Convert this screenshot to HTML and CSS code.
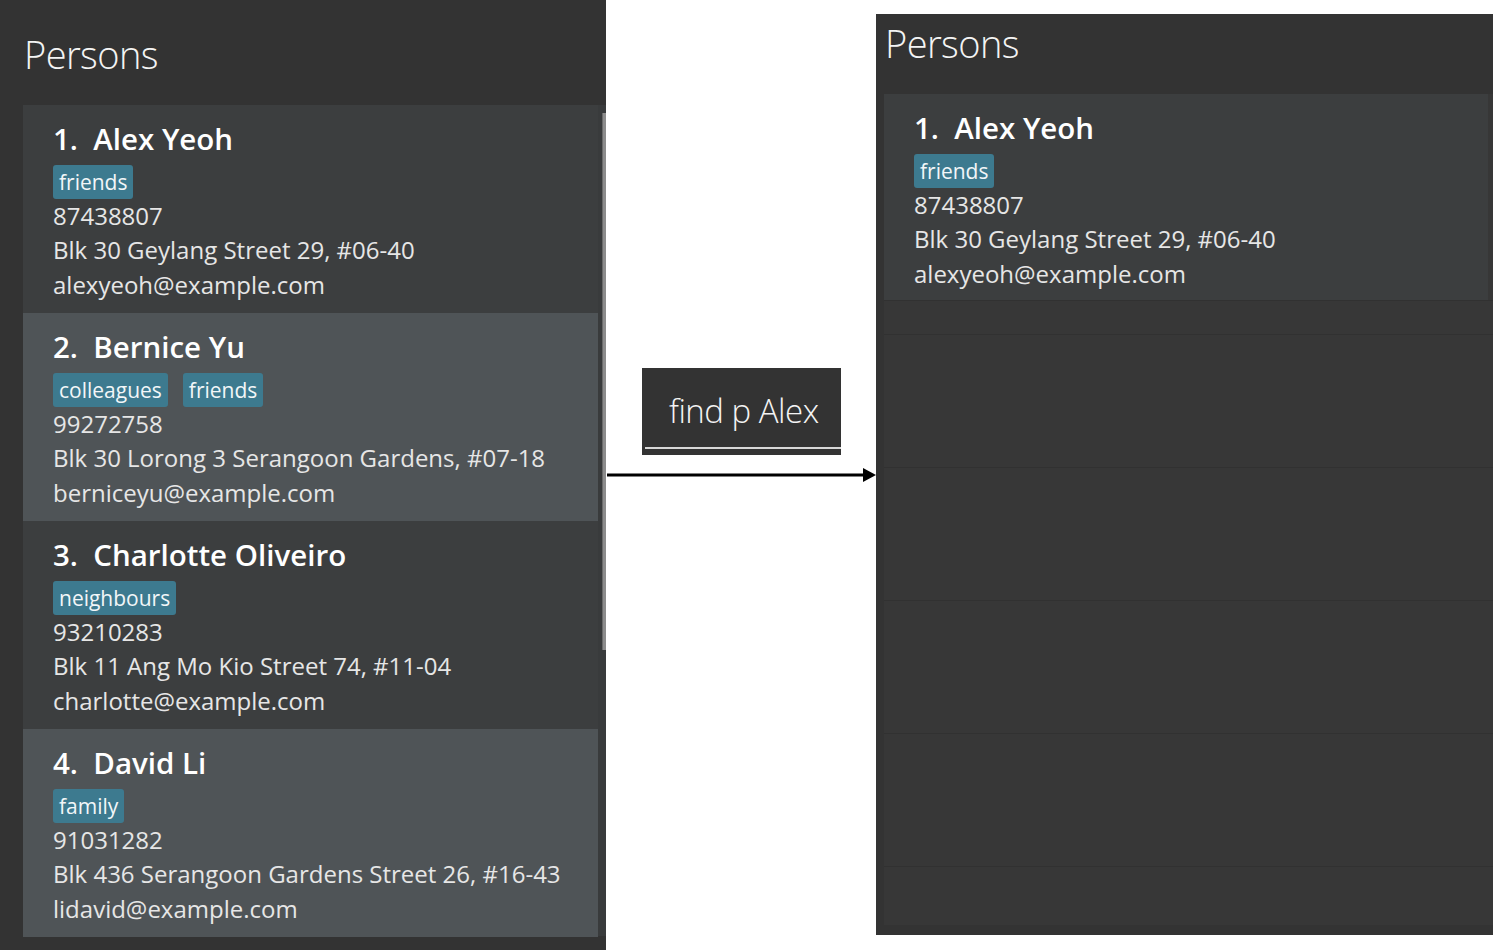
FILE: index.html
```html
<!DOCTYPE html>
<html lang="en">
<head>
<meta charset="utf-8">
<title>Persons - find p Alex</title>
<link rel="stylesheet" href="styles.css">
</head>
<body>
<div class="page">
  <section class="panel panel-left">
    <h1 class="title">Persons</h1>
    <div class="list-wrap">
      <div class="list">
        <div class="card odd">
          <div class="name">1.&nbsp; Alex Yeoh</div>
          <div class="tags"><span class="tag">friends</span></div>
          <div class="line">87438807</div>
          <div class="line">Blk 30 Geylang Street 29, #06-40</div>
          <div class="line">alexyeoh@example.com</div>
        </div>
        <div class="card even">
          <div class="name">2.&nbsp; Bernice Yu</div>
          <div class="tags"><span class="tag">colleagues</span><span class="tag">friends</span></div>
          <div class="line">99272758</div>
          <div class="line">Blk 30 Lorong 3 Serangoon Gardens, #07-18</div>
          <div class="line">berniceyu@example.com</div>
        </div>
        <div class="card odd">
          <div class="name">3.&nbsp; Charlotte Oliveiro</div>
          <div class="tags"><span class="tag">neighbours</span></div>
          <div class="line">93210283</div>
          <div class="line">Blk 11 Ang Mo Kio Street 74, #11-04</div>
          <div class="line">charlotte@example.com</div>
        </div>
        <div class="card even">
          <div class="name">4.&nbsp; David Li</div>
          <div class="tags"><span class="tag">family</span></div>
          <div class="line">91031282</div>
          <div class="line">Blk 436 Serangoon Gardens Street 26, #16-43</div>
          <div class="line">lidavid@example.com</div>
        </div>
      </div>
      <div class="scrollbar"><div class="thumb"></div></div>
    </div>
  </section>

  <div class="middle">
    <div class="cmd">
      <div class="cmd-text">find p Alex</div>
      <div class="cmd-line"></div>
    </div>
    <svg class="arrow" width="270" height="14" viewBox="0 0 270 14">
      <line x1="1" y1="7" x2="259" y2="7" stroke="#000" stroke-width="3"/>
      <polygon points="257,0 270,7 257,14" fill="#000"/>
    </svg>
  </div>

  <section class="panel panel-right">
    <h1 class="title">Persons</h1>
    <div class="rlist">
      <div class="card odd rcard">
        <div class="name">1.&nbsp; Alex Yeoh</div>
        <div class="tags"><span class="tag">friends</span></div>
        <div class="line">87438807</div>
        <div class="line">Blk 30 Geylang Street 29, #06-40</div>
        <div class="line">alexyeoh@example.com</div>
      </div>
      <div class="empty e1"></div>
      <div class="empty e2"></div>
      <div class="empty e2"></div>
      <div class="empty e2"></div>
      <div class="empty e2"></div>
      <div class="empty e3"></div>
    </div>
  </section>
</div>
</body>
</html>
```
FILE: styles.css
```css
html, body {
  margin: 0;
  padding: 0;
  background: #ffffff;
}

body {
  font-family: "Open Sans", "Noto Sans", sans-serif;
  width: 1493px;
  height: 950px;
  overflow: hidden;
}

.page {
  display: flex;
  align-items: flex-start;
  height: 950px;
}

.panel {
  background: #333333;
  box-sizing: border-box;
  display: flex;
  flex-direction: column;
}

.panel-left {
  width: 606px;
  height: 950px;
}

.panel-right {
  width: 617px;
  height: 921px;
  margin-top: 14px;
}

.title {
  margin: 0;
  font-weight: 300;
  font-size: 38px;
  color: #f4f4f4;
  letter-spacing: -0.6px;
}

.panel-left .title {
  height: 95px;
  padding-top: 10px;
  line-height: 88px;
  padding-left: 24px;
}

.panel-right .title {
  height: 80px;
  line-height: 58px;
  padding-left: 9px;
}

.list-wrap {
  display: flex;
  padding-left: 23px;
}

.list {
  width: 575px;
  display: flex;
  flex-direction: column;
}

.scrollbar {
  width: 8px;
  background: #393b3c;
  display: flex;
  justify-content: flex-end;
  padding-top: 8px;
  box-sizing: border-box;
  height: 831px;
}

.thumb {
  width: 3px;
  height: 537px;
  background: #8c8c8c;
  border-left: 1px solid #6a6a6a;
}

.card {
  box-sizing: border-box;
  padding: 16px 0 0 30px;
  display: flex;
  flex-direction: column;
  height: 208px;
  flex-shrink: 0;
}

.card.odd { background: #3c3e3f; }
.card.even { background: #4f5457; }

.name {
  font-weight: 600;
  font-size: 29.5px;
  line-height: 36px;
  height: 36px;
  color: #ffffff;
  margin-bottom: 8px;
  white-space: nowrap;
}

.tags {
  display: flex;
  gap: 15px;
  height: 34px;
}

.tag {
  background: #3d7a8f;
  color: #f2f6f8;
  font-size: 21px;
  line-height: 34px;
  height: 34px;
  padding: 0 6px;
  border-radius: 3px;
}

.line {
  font-size: 24px;
  line-height: 34.5px;
  height: 34.5px;
  margin-top: -0.5px;
  margin-bottom: 0.5px;
  color: #e6e6e6;
  white-space: nowrap;
}

.middle {
  width: 270px;
  padding-top: 368px;
  display: flex;
  flex-direction: column;
}

.cmd {
  margin-left: 36px;
  width: 199px;
  height: 87px;
  background: #333333;
  box-sizing: border-box;
  padding: 20px 0 0 3px;
  display: flex;
  flex-direction: column;
}

.cmd-text {
  font-weight: 300;
  font-size: 33px;
  line-height: 45px;
  height: 59px;
  padding-left: 24px;
  color: #f4f4f4;
  letter-spacing: -0.5px;
}

.cmd-line {
  height: 2px;
  background: #d8d8d8;
}

.arrow {
  display: block;
  margin-top: 13px;
}

.rlist {
  margin-left: 8px;
  width: 609px;
  background: #373737;
  display: flex;
  flex-direction: column;
}

.rcard {
  width: 604px;
  height: 206px;
}

.empty {
  border-top: 1px solid #313131;
  box-sizing: border-box;
}

.e1 { height: 34px; }
.e2 { height: 133px; }
.e3 { height: 59px; }
```
